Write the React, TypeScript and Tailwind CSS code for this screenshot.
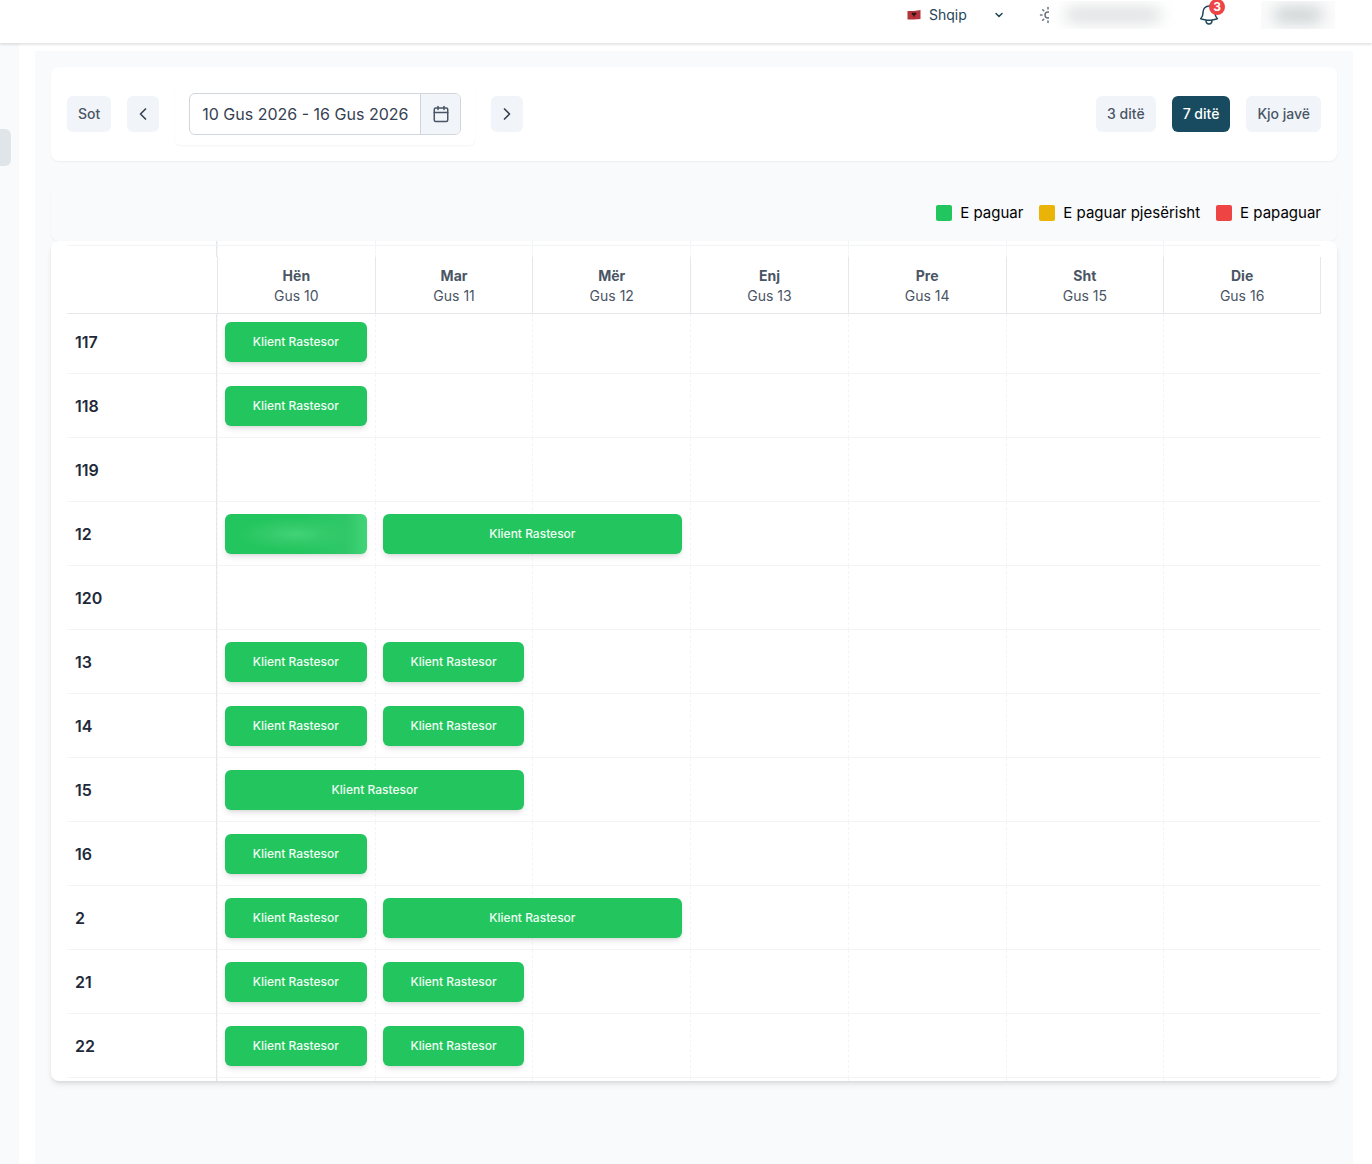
import { useState } from 'react'
import { Calendar, ChevronDown, ChevronLeft, ChevronRight, Sun } from 'lucide-react'

type Booking = { day: number; span: number; guest: string }
type Room = { name: string; bookings: Booking[] }

const guest = 'Klient Rastesor'

const days = [
  { name: 'Hën', date: 'Gus 10' },
  { name: 'Mar', date: 'Gus 11' },
  { name: 'Mër', date: 'Gus 12' },
  { name: 'Enj', date: 'Gus 13' },
  { name: 'Pre', date: 'Gus 14' },
  { name: 'Sht', date: 'Gus 15' },
  { name: 'Die', date: 'Gus 16' }
]

const rooms: Room[] = [
  { name: '117', bookings: [{ day: 0, span: 1, guest }] },
  { name: '118', bookings: [{ day: 0, span: 1, guest }] },
  { name: '119', bookings: [] },
  { name: '12', bookings: [{ day: 0, span: 1, guest: '' }, { day: 1, span: 2, guest }] },
  { name: '120', bookings: [] },
  { name: '13', bookings: [{ day: 0, span: 1, guest }, { day: 1, span: 1, guest }] },
  { name: '14', bookings: [{ day: 0, span: 1, guest }, { day: 1, span: 1, guest }] },
  { name: '15', bookings: [{ day: 0, span: 2, guest }] },
  { name: '16', bookings: [{ day: 0, span: 1, guest }] },
  { name: '2', bookings: [{ day: 0, span: 1, guest }, { day: 1, span: 2, guest }] },
  { name: '21', bookings: [{ day: 0, span: 1, guest }, { day: 1, span: 1, guest }] },
  { name: '22', bookings: [{ day: 0, span: 1, guest }, { day: 1, span: 1, guest }] }
]

const legend = [
  { label: 'E paguar', color: 'bg-[#22c55e]' },
  { label: 'E paguar pjesërisht', color: 'bg-[#eab308]' },
  { label: 'E papaguar', color: 'bg-[#ef4444]' }
]

const ranges = ['3 ditë', '7 ditë', 'Kjo javë']

function Flag() {
  return (
    <svg width="14" height="10" viewBox="0 0 14 10" aria-hidden="true">
      <path d="M0.5 1 L7 1 L13.5 0 V9 L7 9.5 L0.5 9.5 Z" fill="#b5343c" />
      <path d="M7 3 L8 2.5 L9.5 3 L8.6 5 L7.6 5.4 L7 7.5 L6.4 5.4 L5.4 5 L4.5 3 L6 2.5 Z" fill="#2b1518" />
    </svg>
  )
}

function BellIcon() {
  return (
    <svg
      width="24"
      height="24"
      viewBox="0 0 24 24"
      fill="none"
      stroke="currentColor"
      strokeWidth="1.5"
      strokeLinecap="round"
      strokeLinejoin="round"
      aria-hidden="true"
    >
      <path d="M14.857 17.082a23.848 23.848 0 0 0 5.454-1.31A8.967 8.967 0 0 1 18 9.75V9A6 6 0 0 0 6 9v.75a8.967 8.967 0 0 1-2.312 6.022c1.733.64 3.56 1.085 5.455 1.31m5.714 0a24.255 24.255 0 0 1-5.714 0m5.714 0a3 3 0 1 1-5.714 0" />
    </svg>
  )
}

function Header() {
  return (
    <header className="relative z-20 flex h-[43px] items-center justify-end bg-white pr-[37px] pb-[13px] text-[#1f4557] shadow-[0_2px_2px_rgba(0,0,0,0.1)]">
      <label className="relative mr-[34px] flex items-center gap-2">
        <Flag />
        <select aria-label="Gjuha" className="w-[76px] appearance-none bg-transparent text-sm outline-none">
          <option>Shqip</option>
        </select>
        <ChevronDown size={12} strokeWidth={3} className="pointer-events-none absolute right-0" />
      </label>
      <button aria-label="Tema" className="flex items-center text-gray-500">
        <Sun size={18} strokeWidth={2} className="shrink-0" />
        <span className="relative -ml-2 flex h-7 w-32 items-center justify-center overflow-hidden bg-white">
          <span className="h-3 w-24 rounded-full bg-[#d3d6d8] blur-sm" />
        </span>
      </button>
      <button aria-label="Njoftime" className="relative ml-5">
        <BellIcon />
        <span className="absolute -top-1 left-3 flex size-4 items-center justify-center rounded-full bg-[#ef4444] text-xs leading-4 font-bold text-white">
          3
        </span>
      </button>
      <button
        aria-label="Profili"
        className="ml-10 flex h-7 w-[74px] items-center justify-center overflow-hidden bg-[#fbfbfb]"
      >
        <span className="h-3 w-12 rounded-full bg-[#bcc5c8] blur-sm" />
      </button>
    </header>
  )
}

function Toolbar() {
  const [range, setRange] = useState('7 ditë')
  const [dates, setDates] = useState('10 Gus 2026 - 16 Gus 2026')

  return (
    <div className="flex items-center justify-between rounded-lg bg-white p-4 shadow-xs">
      <div className="flex items-center gap-4">
        <button className="h-9 rounded-md bg-slate-100 px-[11px] text-sm font-medium text-gray-600">Sot</button>
        <button aria-label="Para" className="flex h-9 w-8 items-center justify-center rounded-md bg-slate-100 text-gray-700">
          <ChevronLeft size={20} strokeWidth={2} />
        </button>
        <div className="rounded-md px-[14px] py-[10px] shadow-xs">
          <div className="flex h-[42px] w-[272px] overflow-hidden rounded-md border border-gray-300">
            <input
              aria-label="Periudha"
              value={dates}
              onChange={(e) => setDates(e.target.value)}
              className="min-w-0 flex-1 px-3 text-base text-gray-700 outline-none"
            />
            <button
              aria-label="Kalendari"
              className="flex w-10 items-center justify-center border-l border-gray-300 bg-slate-100 text-gray-600"
            >
              <Calendar size={18} strokeWidth={2} />
            </button>
          </div>
        </div>
        <button aria-label="Pas" className="flex h-9 w-8 items-center justify-center rounded-md bg-slate-100 text-gray-700">
          <ChevronRight size={20} strokeWidth={2} />
        </button>
      </div>

      <div className="flex items-center gap-4">
        {ranges.map((item) => (
          <button
            key={item}
            onClick={() => setRange(item)}
            className={`h-9 rounded-md px-[11px] text-sm font-medium ${
              range === item ? 'bg-[#184b5f] text-white' : 'bg-slate-100 text-gray-600'
            }`}
          >
            {item}
          </button>
        ))}
      </div>
    </div>
  )
}

function BookingBar({ booking }: { booking: Booking }) {
  return (
    <button
      aria-label={booking.guest || 'Rezervim'}
      className={`relative z-10 block h-10 overflow-hidden rounded-md bg-[#22c55e] text-center text-xs font-medium text-green-50 shadow-md ${
        booking.span === 2 ? 'w-[calc(200%+16px)]' : 'w-full'
      } ${
        booking.guest
          ? ''
          : 'bg-[radial-gradient(ellipse_at_center,#41d477_0%,#35cb6b_25%,transparent_60%),linear-gradient(to_left,#41d477_0%,#2fc768_15%,#22c55e_50%)]'
      }`}
    >
      {booking.guest}
    </button>
  )
}

// Thin slice of the grid lines above and below the visible rows
function GridEdge({ height, line }: { height: string; line?: boolean }) {
  const border = line ? 'border-b border-b-gray-100' : ''
  return (
    <tr aria-hidden="true" className={height}>
      <td className={`border-r border-r-gray-200 p-0 ${border}`} />
      {days.map((day) => (
        <td key={day.date} className={`border-l border-l-gray-100 p-0 [border-left-style:dashed] ${border}`} />
      ))}
    </tr>
  )
}

function Timeline() {
  return (
    <div className="overflow-hidden rounded-lg bg-white px-4 shadow-md">
      <table className="w-full table-fixed border-separate border-spacing-0">
        <colgroup>
          <col className="w-[150px]" />
          {days.map((day) => (
            <col key={day.date} />
          ))}
        </colgroup>
        <thead>
          <GridEdge height="h-[5px]" line />
          <GridEdge height="h-[11px]" />
          <tr className="h-[57px]">
            <td className="border-b border-gray-200 p-0" />
            {days.map((day) => (
              <th
                key={day.date}
                scope="col"
                className="border-b border-l border-gray-200 px-2 pt-[2px] text-center align-middle text-sm font-normal text-gray-600 last:border-r"
              >
                <div className="font-bold">{day.name}</div>
                <div>{day.date}</div>
              </th>
            ))}
          </tr>
        </thead>
        <tbody>
          {rooms.map((room, index) => {
            const first = index === 0
            return (
              <tr key={room.name} className={first ? 'h-[60px]' : 'h-16'}>
                <th
                  scope="row"
                  className={`border-r border-b border-r-gray-200 border-b-gray-100 px-2 pb-0 text-left align-top text-base font-semibold text-gray-800 ${
                    first ? 'pt-4' : 'pt-5'
                  }`}
                >
                  {room.name}
                </th>
                {days.map((day, dayIndex) => {
                  const booking = room.bookings.find((b) => b.day === dayIndex)
                  return (
                    <td
                      key={day.date}
                      className={`border-b border-l border-b-gray-100 border-l-gray-100 px-2 pb-0 pl-[7px] align-top [border-left-style:dashed] ${
                        first ? 'pt-2' : 'pt-3'
                      }`}
                    >
                      {booking && <BookingBar booking={booking} />}
                    </td>
                  )
                })}
              </tr>
            )
          })}
          <GridEdge height="h-[3px]" />
        </tbody>
      </table>
    </div>
  )
}

export default function App() {
  return (
    <div className="flex min-h-screen flex-col bg-white font-['Inter',sans-serif]">
      <Header />
      <div className="flex flex-1">
        <aside className="w-[19px] shrink-0 bg-slate-50 pt-[86px]">
          <button aria-label="Rezervimet" className="block h-[37px] w-[11px] rounded-r-md bg-[#dfe5e8]" />
        </aside>
        <main className="mt-2 mr-[19px] ml-4 min-w-0 flex-1 bg-slate-50 p-4">
          <Toolbar />
          <div className="mt-6 flex items-center justify-end gap-4 rounded-lg p-4 shadow-xs">
            {legend.map((item) => (
              <div key={item.label} className="flex items-center gap-2 text-[15px] leading-6 text-black">
                <span className={`size-4 rounded-xs ${item.color}`} />
                {item.label}
              </div>
            ))}
          </div>
          <Timeline />
        </main>
      </div>
    </div>
  )
}
